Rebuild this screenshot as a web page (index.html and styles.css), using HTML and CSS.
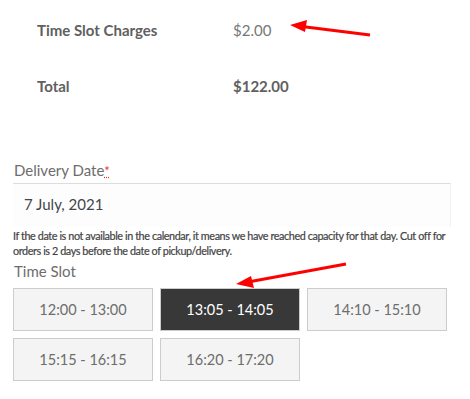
FILE: index.html
```html
<!DOCTYPE html>
<html lang="en">
<head>
  <meta charset="UTF-8">
  <meta name="viewport" content="width=device-width, initial-scale=1.0">
  <title>Checkout - Delivery</title>
  <link rel="stylesheet" href="styles.css">
</head>
<body>
  <div class="totals">
    <div class="row">
      <div class="label">Time Slot Charges</div>
      <div class="amount">$2.00</div>
    </div>
    <div class="row">
      <div class="label">Total</div>
      <div class="amount strong">$122.00</div>
    </div>
  </div>

  <div class="field">
    <label class="field-label">Delivery Date<abbr class="required" title="required">*</abbr></label>
    <div class="date-input">7 July, 2021</div>
    <p class="help">If the date is not available in the calendar, it means we have reached capacity for that day. Cut off for orders is 2 days before the date of pickup/delivery.</p>
  </div>

  <div class="field">
    <label class="field-label slot-label">Time Slot</label>
    <div class="slots">
      <button class="slot">12:00 - 13:00</button>
      <button class="slot selected">13:05 - 14:05</button>
      <button class="slot">14:10 - 15:10</button>
      <button class="slot">15:15 - 16:15</button>
      <button class="slot">16:20 - 17:20</button>
    </div>
  </div>

  <!-- annotation arrows -->
  <svg class="arrows" width="470" height="399" viewBox="0 0 470 399">
    <line x1="370" y1="35" x2="302" y2="26.5" stroke="#f00" stroke-width="3"/>
    <polygon points="290,25 307,20 305,32" fill="#f00"/>
    <line x1="346" y1="264" x2="248" y2="282" stroke="#f00" stroke-width="3"/>
    <polygon points="236,284 251,276 254,288" fill="#f00"/>
  </svg>
</body>
</html>
```

FILE: styles.css
```css
body {
  margin: 0;
  font-family: Lato, "Open Sans", sans-serif;
  color: #6d6d6d;
  background: #fff;
  position: relative;
  width: 470px;
  height: 399px;
  overflow: hidden;
}
.totals { padding-top: 2px; margin-bottom: 44px; }
.row {
  display: flex;
  align-items: center;
  height: 56px;
  font-size: 15px;
}
.label {
  width: 196px;
  padding-left: 37px;
  font-weight: bold;
  color: #606060;
}
.amount { color: #777; }
.amount.strong { font-weight: bold; color: #606060; }

.field { padding: 0 19px 0 13px; }
.field-label {
  display: block;
  font-size: 15px;
  line-height: 24px;
  padding-left: 1px;
  color: #6d6d6d;
}
.required {
  color: #e2401c;
  text-decoration: underline dotted;
  font-size: 13px;
}
.date-input {
  height: 43px;
  border-top: 1px solid #ddd;
  border-right: 1px solid #f2f2f2;
  background: #fdfdfd;
  padding-left: 11px;
  font-size: 15px;
  line-height: 41px;
  color: #43454b;
}
.help {
  margin: 0;
  padding-top: 1px;
  font-size: 10.8px;
  line-height: 15px;
  letter-spacing: -0.4px;
  color: #444;
  -webkit-text-stroke: 0.2px #444;
}
.slot-label { margin-top: 1px; }
.slots {
  display: grid;
  grid-template-columns: repeat(3, 140px);
  gap: 7px;
  margin-top: 5px;
}
.slot {
  height: 43px;
  border: 1px solid #ccc;
  background: #f4f4f4;
  color: #6d6d6d;
  font-family: inherit;
  font-size: 14.5px;
  padding: 0;
}
.slot.selected {
  background: #383838;
  color: #fff;
}
.arrows {
  position: absolute;
  left: 0;
  top: 0;
  pointer-events: none;
}
```
